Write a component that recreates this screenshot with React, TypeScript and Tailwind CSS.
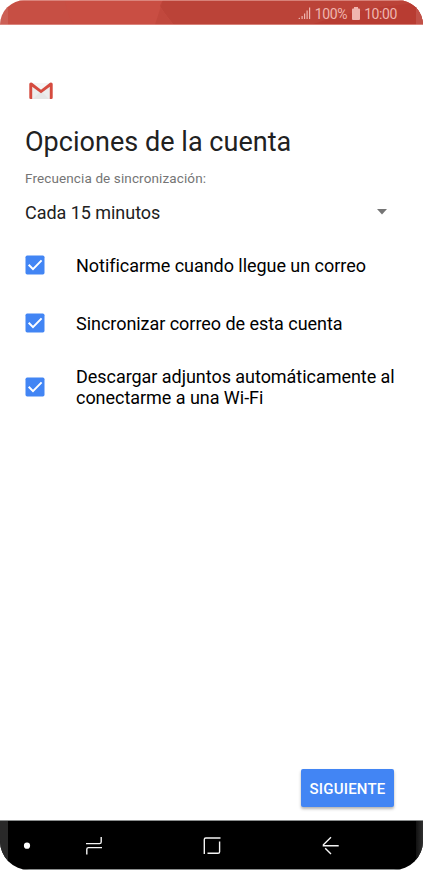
const options = [
  { lines: ['Notificarme cuando llegue un correo'], row: 'h-[58px]' },
  { lines: ['Sincronizar correo de esta cuenta'], row: 'h-[58px]' },
  { lines: ['Descargar adjuntos automáticamente al', 'conectarme a una Wi-Fi'], row: 'h-[69px]' },
];

function StatusBar() {
  return (
    <header className="relative flex h-[25px] shrink-0 items-center justify-end overflow-hidden rounded-t-[29px] bg-[#c74f44] pr-[26px] text-[#efb5af]">
      <svg className="absolute inset-0" width="423" height="25" viewBox="0 0 423 25">
        <path d="M65 0H163L155 25H74Q67 14 65 0Z" fill="#c94e43" />
        <path d="M163 0H423V25H174Q164 13 160 6Z" fill="#bb4338" />
        <path d="M163 0L160 6Q165 15 174 25H155Z" fill="#c1483d" />
        <path d="M310 25Q370 5 423 3V25Z" fill="#b83c32" />
        <path d="M0 0H8V25H0ZM416 0H423V25H416Z" fill="#d6847d" fillOpacity=".3" />
        <path d="M0 .5H423M0 24.5H423" stroke="#e39b94" strokeOpacity=".7" />
      </svg>
      <svg className="relative mr-1 mt-[2px]" width="13" height="13" viewBox="0 0 13 13" fill="currentColor">
        <path d="M0 12L2 10.5V12ZM3.5 9H4.7V12H3.5ZM6 6.5H7.2V12H6ZM8.5 3.5H9.7V12H8.5ZM11 .5H12.2V12H11Z" />
      </svg>
      <span className="relative mt-[3px] text-[14px] leading-4 tracking-[-0.4px]">100%</span>
      <svg className="relative ml-[5px] mr-[4px] mt-[1px]" width="8" height="13" viewBox="0 0 8 13" fill="currentColor">
        <path d="M2 0H6V1.5H7Q8 1.5 8 2.5V12Q8 13 7 13H1Q0 13 0 12V2.5Q0 1.5 1 1.5H2Z" />
      </svg>
      <span className="relative mt-[3px] text-[14px] leading-4 tracking-[-0.4px]">10:00</span>
    </header>
  );
}

function GmailLogo() {
  return (
    <svg width="24" height="18" viewBox="0 0 24 18" className="block">
      <path d="M2 1H22V17H2Z" fill="#eceded" />
      <path d="M4 17L12 9L20 17Z" fill="#e5e6e6" />
      <path d="M3 1H21L12 8Z" fill="#f5f5f5" />
      <path d="M.3 2Q.3.4 2 .4L3 .8L12 7.7L21 .8L22 .4Q23.7.4 23.7 2V15.7Q23.7 17 22.3 17H20.8V4.7L12 11.2L3.2 4.7V17H1.7Q.3 17 .3 15.7Z" fill="#d54b3f" />
    </svg>
  );
}

function Checkbox() {
  return (
    <svg role="checkbox" aria-checked="true" width="20" height="20" viewBox="0 0 20 20" className="shrink-0">
      <rect x=".5" y=".5" width="19" height="19" rx="1.7" fill="#4285f4" />
      <path d="M3.7 9.8L8 14.1L16.6 5.4" fill="none" stroke="#fff" strokeWidth="2" />
    </svg>
  );
}

function NavigationBar() {
  return (
    <nav className="h-[50px] shrink-0 overflow-hidden rounded-b-[29px] bg-black">
      <svg width="423" height="50" viewBox="0 0 423 50" fill="none">
        <defs>
          <linearGradient id="right-edge"><stop stopColor="#111" /><stop offset="1" stopColor="#303030" /></linearGradient>
        </defs>
        <path d="M0 0H8V50H0Z" fill="#292929" />
        <path d="M416 0H423V50H416Z" fill="url(#right-edge)" />
        <path d="M0 .5H423M0 49.5H423" stroke="#8b8e8e" />
        <circle cx="27" cy="25.7" r="3.1" fill="#fff" />
        <g stroke="#f4f4f4" strokeWidth="1.4">
          <path d="M86 23.6H99.5Q101.2 23.6 101.2 21.9V17M102 27.6H88.5Q86.8 27.6 86.8 29.3V34.5" />
          <path d="M220.5 18H205.8Q204.3 18 204.3 19.5V34M207.5 33.3H218Q219.6 33.3 219.6 31.7V21.5" />
          <path d="M331 17.3L323.4 24.7V25.7H338.7M325.2 28.2L331 34" />
        </g>
      </svg>
    </nav>
  );
}

export default function App() {
  return (
    <div className="flex h-[870px] w-[423px] flex-col overflow-hidden bg-white font-['Roboto',sans-serif]">
      <StatusBar />
      <main className="flex min-h-0 flex-1 flex-col">
        <div className="pl-[29px] pt-[57px]"><GmailLogo /></div>
        <h1 className="mt-[26px] whitespace-nowrap pl-[25px] text-[27px] leading-8 tracking-[0.03px] text-[#212121]">Opciones de la cuenta</h1>
        <p className="mt-[12px] whitespace-nowrap pl-[25px] text-[13.5px] leading-[17px] tracking-[0.12px] text-[#757575]">Frecuencia de sincronización:</p>
        <div className="mt-[13px] flex h-[25px] items-center justify-between pl-[25px] pr-[36px] text-[#212121]">
          <span className="whitespace-nowrap text-[18px] tracking-[-0.04px]">Cada 15 minutos</span>
          <svg width="10" height="6" viewBox="0 0 10 6" className="mb-[1px]"><path d="M0 0H10L5 5.5Z" fill="#757575" /></svg>
        </div>
        <div className="mt-[11px]">
          {options.map(({ lines, row }) => (
            <div key={lines[0]} className={`${row} flex items-center gap-[31px] pl-[25px]`}>
              <Checkbox />
              <div className="whitespace-nowrap text-[18px] leading-[21px] tracking-[-0.04px] text-black">
                {lines.map((line) => <div key={line}>{line}</div>)}
              </div>
            </div>
          ))}
        </div>
        <button className="mb-[13px] mr-[29px] mt-auto h-[38px] w-[93px] self-end rounded-[2px] bg-[#4285f4] pt-[2px] text-[15px] font-medium tracking-[0.2px] text-white shadow-[0_2px_3px_rgba(0,0,0,0.3)]">SIGUIENTE</button>
      </main>
      <NavigationBar />
    </div>
  );
}
